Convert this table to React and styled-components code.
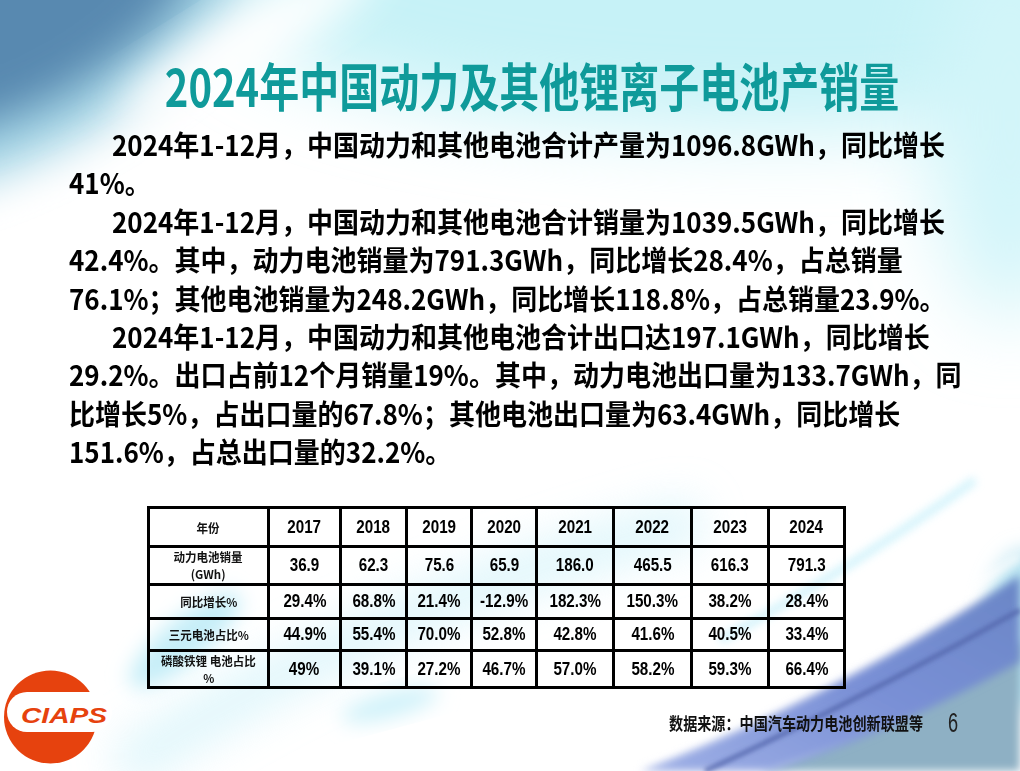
import styled, { createGlobalStyle } from "styled-components";

const GlobalStyle = createGlobalStyle`
  html, body {
    margin: 0;
    padding: 0;
    background: #ffffff;
  }
`;

const Slide = styled.div`
  position: relative;
  width: 1020px;
  height: 771px;
  overflow: hidden;
  background: #ffffff;
  font-family: "Noto Sans CJK SC", "Noto Sans", sans-serif;
`;

const Backdrop = styled.svg`
  position: absolute;
  inset: 0;
  z-index: 0;
`;

const Content = styled.div`
  position: relative;
  z-index: 1;
  display: flex;
  flex-direction: column;
  height: 100%;
`;

const TitleBar = styled.div`
  display: flex;
  justify-content: center;
  padding: 68px 0 0 44px;
`;

const Title = styled.h1`
  margin: 0;
  font-size: 40px;
  line-height: 34px;
  font-weight: 700;
  color: #0f9a9a;
  white-space: nowrap;
  transform: scaleY(1.3);
`;

const Body = styled.div`
  margin-top: 23px;
  padding-left: 69px;
`;

const Line = styled.div`
  font-size: 26px;
  line-height: 38.4px;
  font-weight: 700;
  color: #000;
  white-space: nowrap;
  padding-left: ${(p) => (p.indent ? "43px" : "0")};
`;

const LineText = styled.span`
  display: inline-block;
  line-height: 28px;
  transform: scaleY(1.1);
`;

const Lower = styled.div`
  flex: 1;
  display: grid;
  grid-template-columns: 147px 1fr;
  grid-template-rows: 1fr;
  margin-top: 35px;
`;

const LogoCell = styled.div`
  align-self: end;
  padding: 0 0 1px 0;
`;

const Main = styled.div`
  display: flex;
  flex-direction: column;
`;

const Table = styled.table`
  width: 696px;
  table-layout: fixed;
  border-collapse: collapse;
  border: 3px solid #000;
`;

const Cell = styled.td`
  border: 3px solid #000;
  padding: 0;
  height: ${(p) => p.h}px;
  line-height: 1;
  text-align: center;
  vertical-align: middle;
  background: transparent;
`;

const Num = styled.span`
  display: inline-block;
  font-family: "Liberation Sans", Arial, sans-serif;
  font-weight: 700;
  font-size: 19px;
  line-height: 20px;
  color: #000;
  white-space: nowrap;
  transform: scaleX(0.8);
`;

const LabelLine = styled.div`
  font-size: 12px;
  line-height: 17px;
  white-space: nowrap;
`;

const Label = styled.span`
  display: inline-block;
  font-family: "Noto Sans CJK SC", sans-serif;
  font-weight: 700;
  font-size: 12px;
  line-height: 17px;
  color: #111;
  white-space: nowrap;
  transform: scaleX(0.96);
`;

const Footer = styled.div`
  display: flex;
  justify-content: flex-end;
  align-items: center;
  gap: 25px;
  height: 20px;
  margin-top: 24px;
  padding-right: 56px;
`;

const Source = styled.span`
  display: inline-block;
  font-size: 17px;
  line-height: 20px;
  font-weight: 700;
  color: #111;
  white-space: nowrap;
  transform: scaleX(0.83);
  transform-origin: right center;
`;

const PageNum = styled.span`
  display: inline-block;
  font-family: "Liberation Sans", Arial, sans-serif;
  font-size: 28px;
  line-height: 20px;
  color: #222;
  transform: scaleX(0.65);
  transform-origin: left center;
`;

const paragraphs = [
  [
    "2024年1-12月，中国动力和其他电池合计产量为1096.8GWh，同比增长",
    "41%。",
  ],
  [
    "2024年1-12月，中国动力和其他电池合计销量为1039.5GWh，同比增长",
    "42.4%。其中，动力电池销量为791.3GWh，同比增长28.4%，占总销量",
    "76.1%；其他电池销量为248.2GWh，同比增长118.8%，占总销量23.9%。",
  ],
  [
    "2024年1-12月，中国动力和其他电池合计出口达197.1GWh，同比增长",
    "29.2%。出口占前12个月销量19%。其中，动力电池出口量为133.7GWh，同",
    "比增长5%，占出口量的67.8%；其他电池出口量为63.4GWh，同比增长",
    "151.6%，占总出口量的32.2%。",
  ],
];

const years = ["2017", "2018", "2019", "2020", "2021", "2022", "2023", "2024"];
const colWidths = [120, 72, 66, 65, 65, 77, 78, 77, 76];

// row heights are the border-to-border pitch minus the 3px rule
const rows = [
  {
    label: ["动力电池销量", "(GWh)"],
    h: 35,
    values: ["36.9", "62.3", "75.6", "65.9", "186.0", "465.5", "616.3", "791.3"],
  },
  {
    label: ["同比增长%"],
    h: 31,
    values: ["29.4%", "68.8%", "21.4%", "-12.9%", "182.3%", "150.3%", "38.2%", "28.4%"],
  },
  {
    label: ["三元电池占比%"],
    h: 29,
    values: ["44.9%", "55.4%", "70.0%", "52.8%", "42.8%", "41.6%", "40.5%", "33.4%"],
  },
  {
    label: ["磷酸铁锂 电池占比", "%"],
    h: 34,
    values: ["49%", "39.1%", "27.2%", "46.7%", "57.0%", "58.2%", "59.3%", "66.4%"],
  },
];

const Background = () => (
  <Backdrop width="1020" height="771" viewBox="0 0 1020 771">
    <defs>
      <filter id="b40" x="-50%" y="-50%" width="200%" height="200%">
        <feGaussianBlur stdDeviation="40" />
      </filter>
      <filter id="b22" x="-50%" y="-50%" width="200%" height="200%">
        <feGaussianBlur stdDeviation="22" />
      </filter>
      <filter id="b10" x="-50%" y="-50%" width="200%" height="200%">
        <feGaussianBlur stdDeviation="10" />
      </filter>
      <filter id="b4" x="-20%" y="-20%" width="140%" height="140%">
        <feGaussianBlur stdDeviation="4" />
      </filter>
      <filter id="b2" x="-20%" y="-20%" width="140%" height="140%">
        <feGaussianBlur stdDeviation="2" />
      </filter>
      <linearGradient id="band" x1="0" y1="1" x2="1" y2="0">
        <stop offset="0" stopColor="#9fb0e6" />
        <stop offset="0.5" stopColor="#7a90d6" />
        <stop offset="1" stopColor="#6a86c6" />
      </linearGradient>
    </defs>
    <rect width="1020" height="771" fill="#ffffff" />
    <ellipse cx="780" cy="-10" rx="560" ry="140" fill="#c6f2f7" filter="url(#b40)" />
    <ellipse cx="1010" cy="120" rx="80" ry="200" fill="#d2f5f9" filter="url(#b40)" />
    <ellipse cx="60" cy="70" rx="220" ry="70" transform="rotate(-30 60 70)" fill="#a6d6e6" filter="url(#b22)" />
    <ellipse cx="20" cy="20" rx="200" ry="85" transform="rotate(-28 20 20)" fill="#5889b0" filter="url(#b22)" />
    <ellipse cx="250" cy="40" rx="150" ry="30" transform="rotate(-32 250 40)" fill="#ffffff" filter="url(#b22)" />
    <path d="M120 770 Q 380 600 700 520" stroke="#d2f3fa" strokeWidth="46" fill="none" opacity="0.7" filter="url(#b22)" />
    <ellipse cx="185" cy="640" rx="70" ry="22" transform="rotate(-40 185 640)" fill="#c6eef8" filter="url(#b10)" />
    <ellipse cx="390" cy="705" rx="50" ry="12" transform="rotate(-15 390 705)" fill="#cdf1f9" filter="url(#b10)" />
    <path d="M720 640 Q 850 570 975 480" stroke="#c2effa" strokeWidth="8" fill="none" opacity="0.75" filter="url(#b4)" />
    <ellipse cx="1025" cy="630" rx="40" ry="80" fill="#b6e2f0" filter="url(#b10)" />
    <path d="M1020 640 Q 880 725 760 771 L1020 771 Z" fill="#8eb0c4" filter="url(#b4)" />
    <path d="M640 771 Q 830 700 1020 575 L1020 662 Q 880 738 770 771 Z" fill="url(#band)" filter="url(#b4)" />
    <path d="M705 771 Q 870 695 1020 610" stroke="#5567ad" strokeWidth="5" fill="none" opacity="0.8" filter="url(#b2)" />
    <path d="M610 771 Q 820 690 1020 556" stroke="#ffffff" strokeWidth="8" fill="none" opacity="0.8" filter="url(#b4)" />
  </Backdrop>
);

const Logo = () => (
  <svg width="112" height="98" viewBox="0 0 112 98">
    <circle cx="50.5" cy="50" r="46.5" fill="#e6420e" />
    <rect x="7" y="25" width="105" height="40" rx="20" fill="#ffffff" />
    <text
      x="21"
      y="56"
      fontFamily="Liberation Sans, Arial, sans-serif"
      fontWeight="700"
      fontStyle="italic"
      fontSize="22"
      textLength="86"
      lengthAdjust="spacingAndGlyphs"
      fill="#e6420e"
    >
      CIAPS
    </text>
  </svg>
);

const App = () => {
  return (
    <Slide>
      <GlobalStyle />
      <Background />
      <Content>
        <TitleBar>
          <Title>2024年中国动力及其他锂离子电池产销量</Title>
        </TitleBar>
        <Body>
          {paragraphs.map((lines, i) =>
            lines.map((text, j) => (
              <Line key={`${i}-${j}`} indent={j === 0}>
                <LineText>{text}</LineText>
              </Line>
            ))
          )}
        </Body>
        <Lower>
          <LogoCell>
            <Logo />
          </LogoCell>
          <Main>
            <Table>
              <colgroup>
                {colWidths.map((w, i) => (
                  <col key={i} style={{ width: w }} />
                ))}
              </colgroup>
              <tbody>
                <tr>
                  <Cell h={36}>
                    <Label>年份</Label>
                  </Cell>
                  {years.map((y) => (
                    <Cell h={36} key={y}>
                      <Num>{y}</Num>
                    </Cell>
                  ))}
                </tr>
                {rows.map((row) => (
                  <tr key={row.label[0]}>
                    <Cell h={row.h}>
                      {row.label.map((l, k) => (
                        <LabelLine key={k}>
                          <Label>{l}</Label>
                        </LabelLine>
                      ))}
                    </Cell>
                    {row.values.map((v, k) => (
                      <Cell h={row.h} key={k}>
                        <Num>{v}</Num>
                      </Cell>
                    ))}
                  </tr>
                ))}
              </tbody>
            </Table>
            <Footer>
              <Source>数据来源：中国汽车动力电池创新联盟等</Source>
              <PageNum>6</PageNum>
            </Footer>
          </Main>
        </Lower>
      </Content>
    </Slide>
  );
};

export default App;
